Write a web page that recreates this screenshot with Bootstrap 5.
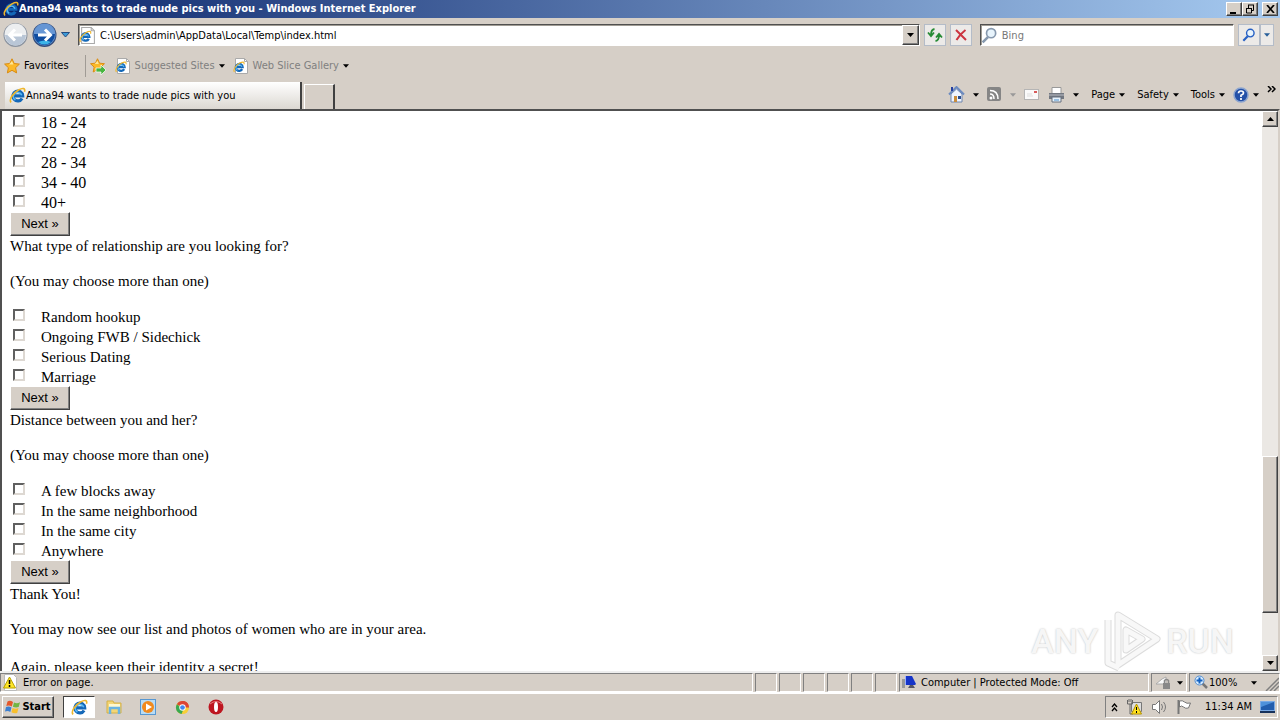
<!DOCTYPE html>
<html lang="en">
<head>
<meta charset="utf-8">
<meta name="viewport" content="width=device-width, initial-scale=1">
<title>Anna94 wants to trade nude pics with you</title>
<link href="https://cdn.jsdelivr.net/npm/bootstrap@5.3.0/dist/css/bootstrap.min.css" rel="stylesheet">
<style>
:root{--face:#d6cfc7;--dark:#808080;--ui:"DejaVu Sans Condensed","DejaVu Sans",sans-serif}
body{font:11px/16px var(--ui);color:#000;background:var(--face)}
button,input{font:inherit;color:inherit;border-radius:0}
svg{display:block;flex:none}
.plain{border:0;background:none;padding:0;white-space:nowrap}
.raised{background:var(--face);border:1px solid;border-color:#fff #404040 #404040 #fff;box-shadow:inset -1px -1px 0 var(--dark);padding:0;display:flex;align-items:center;justify-content:center}
.title-strip{height:18px;background:linear-gradient(90deg,#0a246a,#a6caf0);color:#fff;font-weight:700;padding:0 2px 0 3px}
.title-strip h1{font:inherit;margin:0}
.title-strip .raised{width:16px;height:14px}
.nav-strip{height:34px;padding:0 6px 0 3px}
.sunken{background:#fff;border:1px solid #fff;border-color:#505050 #fff #fff #505050;box-shadow:inset 1px 1px 0 #a09c94;height:22px}
.sunken input{border:0;background:none;outline:0;padding:2px 0 0;min-width:0}
.sunken input::placeholder{color:#777;opacity:1}
.find-box{width:20%}
.tool{width:22px;height:22px;padding:0;border:1px solid #b4bcc8;background:#eceae8;display:flex;align-items:center;justify-content:center}
.tool-menu{width:14px}
.fav-strip{height:28px;padding-left:4px}
.fav-strip .vr{height:22px;align-self:center}
.muted{color:#808080}
.muted .arrow{fill:#000}
.tab-strip{height:29px;padding:0 4px 0 5px}
.tab-on{width:297px;height:27px;background:linear-gradient(#fff,#dcd8d2);border:0;border-right:2px solid #404040;padding:0 0 0 4px;text-align:left}
.tab-new{width:31px;height:25px;background:none;border:1px solid #fff;border-right:2px solid #404040;border-bottom:0;margin-left:2px}
.pane{border:2px solid #505050;border-right-color:var(--face);border-bottom:0;background:#fff;min-height:0}
.doc{font:15px/20px "Liberation Serif",serif;padding:1px 8px 0}
.doc h2{font:inherit;margin:0 0 15px}
.doc p{margin:0 0 15px}
.doc .last-gap{margin-bottom:18px}
.ages{font-size:16px}
.opt{display:flex;align-items:center;height:20px;width:max-content}
.opt span{padding-top:2px}
.opt input{appearance:none;width:12px;height:12px;margin:0 16px 2px 3px;background:#fff;border:2px solid;border-color:#606060 #ddd8d2 #ddd8d2 #606060}
.next{font:13px/20px "Liberation Sans",sans-serif;width:60px;height:24px}
.bar-v{width:16px;background:#ebe8e4}
.bar-v .raised{width:16px;height:16px}
.bar-v .thumb{height:28%}
.brand-mark{right:44px;bottom:-1px;gap:4px;color:#f6f6f6;font:500 34px/62px Roboto,sans-serif;text-shadow:0 0 2px #bbb}
.status{height:23px;border-top:2px solid #eee;border-bottom:2px solid #fff}
.cell{height:19px;border:1px solid;border-color:var(--dark) #fff #fff var(--dark);margin-right:2px;display:flex;align-items:center}
.cell-s{width:22px}
.cell-zone{width:250px;padding-left:2px}
.cell-lock{width:36px}
.cell-zoom{width:91px;margin:0}
.taskbar{height:26px;padding:0 2px}
.start{width:52px;height:22px;font-weight:700;gap:1px}
.task-on{width:32px;height:22px;background:#fff;border:1px solid;border-color:#404040 #fff #fff #404040;display:flex;align-items:center;justify-content:center;padding:0;margin:0 2px 0 9px}
.launch{width:34px;display:flex;justify-content:center}
.tray{height:22px;border:1px solid;border-color:var(--dark) #fff #fff var(--dark);padding:0 1px 0 5px}
</style>
</head>
<body class="vh-100 overflow-hidden d-flex flex-column">
<svg width="0" height="0" class="position-absolute" aria-hidden="true">
<symbol id="ie" viewBox="0 0 16 16"><path d="M12.300 10.800A4.600 4.600 0 1 1 12.900 8.300H4.400" fill="none" stroke="#1468b8" stroke-width="3"/><path d="M12 7.800A4.200 4.200 0 0 0 4 8.500Q4 11 6 12.300" fill="none" stroke="#58b8f4" stroke-width="1.400"/><path d="M2 14.500C-.5 12 4 5.500 9 2.800 13 .6 15.800 1 14.500 4.500" fill="none" stroke="#eeb62c" stroke-width="1.500"/></symbol>
<symbol id="iepage" viewBox="0 0 16 16"><path d="M2.500.5h9l3 3v12h-12z" fill="#fff" stroke="#aaa"/><path d="M11.500.5v3h3" fill="none" stroke="#aaa"/><use href="#ie" x="0" y="3" width="12" height="12"/></symbol>
<symbol id="dn" viewBox="0 0 7 4"><path d="M0 0h7L3.500 4z"/></symbol>
<symbol id="star" viewBox="0 0 16 16"><path d="M8 .8l2.200 4.700 5.200.6-3.800 3.600 1 5.200L8 12.300l-4.600 2.600 1-5.200L.6 6.100l5.200-.6z" fill="#fcb928" stroke="#d98a10"/><path d="M8 3l1.400 3.400H5z" fill="#ffe796"/></symbol>
<symbol id="lens" viewBox="0 0 16 16"><path d="M6.500 9.500L1.500 14.500" stroke="currentColor" stroke-width="2.500"/><circle cx="9.500" cy="5.800" r="4.300" fill="#e8f4fc" stroke="currentColor" stroke-width="1.600"/></symbol>
</svg>

<header>
<div class="title-strip d-flex align-items-center">
<svg width="16" height="16"><use href="#ie"/></svg><h1 class="flex-grow-1 text-nowrap overflow-hidden">Anna94 wants to trade nude pics with you - Windows Internet Explorer</h1>
<button class="raised" aria-label="Minimize"><svg width="10" height="9"><path d="M1 7h6v2H1z"/></svg></button>
<button class="raised" aria-label="Restore"><svg width="10" height="10" fill="none" stroke="#000"><path d="M3 1h6M3.500 1v3M8.500 1v5.500H7M1 4.500h6M1.500 4v5h5V4"/></svg></button>
<button class="raised ms-1" aria-label="Close"><svg width="9" height="8" stroke="#000" stroke-width="1.700"><path d="M1 0l7 8M8 0L1 8"/></svg></button>
</div>
<nav class="nav-strip d-flex align-items-center" aria-label="Navigation">
<button class="plain me-1" aria-label="Back"><svg width="25" height="26" viewBox="0 0 25 26"><circle cx="12.500" cy="13" r="12" fill="#8a93a0"/><circle cx="12.500" cy="12.500" r="11" fill="#eceef0"/><path d="M2 13a10.500 10.500 0 0 0 21 0z" fill="#b9c6d6"/><path d="M19 13H7m5-5.500L6.500 13l5.500 5.500" fill="none" stroke="#fff" stroke-width="3"/></svg></button>
<button class="plain" aria-label="Forward"><svg width="25" height="26" viewBox="0 0 25 26"><circle cx="12.500" cy="13" r="12" fill="#344d7c"/><circle cx="12.500" cy="12.500" r="11" fill="#6696d4"/><path d="M2 12a10.500 11 0 0 0 21 0z" fill="#104da0"/><path d="M6 20q6.500 5 13 0-6-3-13 0" fill="#3cb4e8"/><path d="M6 13h12m-5-5.500l5.500 5.500-5.500 5.500" fill="none" stroke="#fff" stroke-width="3"/></svg></button>
<button class="plain px-1 me-1" aria-label="Recent pages"><svg width="9" height="6"><path d="M.5.5h8L4.500 5z" fill="#3a9ad8" stroke="#234b80"/></svg></button>
<div class="sunken d-flex align-items-center flex-grow-1 me-1"><svg width="17" height="17" class="me-1"><use href="#iepage"/></svg><input class="flex-grow-1" aria-label="Address" value="C:\Users\admin\AppData\Local\Temp\index.html"><button class="raised h-100 px-1" aria-label="Show addresses"><svg width="7" height="4"><use href="#dn"/></svg></button></div>
<button class="tool me-1" aria-label="Refresh"><svg width="16" height="14" viewBox="0 0 16 14" fill="none" stroke="#278b35" stroke-width="1.800"><path d="M7.500 1Q4 1.500 4 7M1 4.500L4 8l3-3.500M8.500 13q3.500-.5 3.500-6M9 9.500L12 6l3 3.500"/></svg></button>
<button class="tool me-2" aria-label="Stop"><svg width="12" height="12" stroke="#cc3540" stroke-width="2"><path d="M1 1l10 10M10.500 1Q5 5 1.500 11"/></svg></button>
<div class="sunken find-box d-flex align-items-center me-1"><svg width="17" height="17" class="me-1" color="#8799ae"><use href="#lens"/></svg><input class="flex-grow-1" aria-label="Search" placeholder="Bing"></div>
<button class="tool" aria-label="Search"><svg width="14" height="14" color="#2660c4"><use href="#lens"/></svg></button><button class="tool tool-menu" aria-label="Search options"><svg width="6" height="4" fill="#285f9a"><use href="#dn"/></svg></button>
</nav>
<nav class="fav-strip d-flex align-items-center" aria-label="Favorites">
<button class="plain d-flex align-items-center gap-1"><svg width="16" height="16"><use href="#star"/></svg>Favorites</button>
<i class="vr ms-3 me-1"></i>
<button class="plain me-2" aria-label="Add to favorites"><svg width="17" height="17"><use href="#star" width="15" height="15"/><path d="M6 10h5V7l5 5-5 5v-3H6z" fill="#49b540" stroke="#fff" stroke-width=".7"/></svg></button>
<button class="plain muted d-flex align-items-center gap-1 me-2"><svg width="16" height="16"><use href="#iepage"/></svg>Suggested Sites <svg class="arrow" width="6" height="4"><use href="#dn"/></svg></button>
<button class="plain muted d-flex align-items-center gap-1"><svg width="16" height="16"><use href="#iepage"/></svg>Web Slice Gallery <svg class="arrow" width="6" height="4"><use href="#dn"/></svg></button>
</nav>
<div class="tab-strip d-flex align-items-end">
<button class="tab-on d-flex align-items-center"><svg width="17" height="17"><use href="#ie"/></svg>Anna94 wants to trade nude pics with you</button>
<button class="tab-new" aria-label="New tab"></button>
<div class="ms-auto align-self-center d-flex align-items-center gap-2">
<button class="plain d-flex align-items-center gap-2" aria-label="Home"><svg width="17" height="17" viewBox="0 0 17 17"><path d="M3 8v8h11V8L8.500 3z" fill="#eef4ff" stroke="#6f86ad"/><path d="M1 8.500L8.500 1 16 8.500" fill="none" stroke="#6c8bc0" stroke-width="2"/><path d="M3 1h2v4H3z" fill="#263fa0"/><path d="M6 10h3v6H6z" fill="#c98d3d"/><path d="M10 10h3v3h-3z" fill="#284c8c"/></svg><svg width="6" height="4"><use href="#dn"/></svg></button>
<button class="plain d-flex align-items-center gap-2" aria-label="Feeds"><svg width="15" height="15"><rect width="14" height="14" rx="2" fill="#858585"/><circle cx="4" cy="11" r="1.500" fill="#fff"/><path d="M3 7q4 0 4 5M3 3.500q8 0 8 8.500" fill="none" stroke="#fff" stroke-width="1.500"/></svg><svg width="6" height="4" fill="#999"><use href="#dn"/></svg></button>
<button class="plain" aria-label="Read mail"><svg width="16" height="12"><rect x=".5" y=".5" width="14" height="10" fill="#fafafa" stroke="#b5b5b5"/><path d="M10 2h3v2h-3z" fill="#d85b5b"/><path d="M3 5h5M3 7h6" stroke="#ddd"/></svg></button>
<button class="plain d-flex align-items-center gap-2" aria-label="Print"><svg width="17" height="16"><path d="M4 .5h9v7H4z" fill="#fff" stroke="#999"/><path d="M1 6h15v6H1z" fill="#727780"/><path d="M1 8h15" stroke="#b9bdc4"/><path d="M4 10h9v5H4z" fill="#e8f2fb" stroke="#66717e"/><path d="M6 13h5" stroke="#4b8fc9"/></svg><svg width="6" height="4"><use href="#dn"/></svg></button>
<button class="plain d-flex align-items-center gap-1 ms-1">Page<svg width="6" height="4"><use href="#dn"/></svg></button>
<button class="plain d-flex align-items-center gap-1 ms-1">Safety<svg width="6" height="4"><use href="#dn"/></svg></button>
<button class="plain d-flex align-items-center gap-1 ms-1">Tools<svg width="6" height="4"><use href="#dn"/></svg></button>
<button class="plain d-flex align-items-center gap-1" aria-label="Help"><svg width="16" height="16"><circle cx="8" cy="8" r="7" fill="#2451a8" stroke="#8ca5cf" stroke-width="1.500"/><path d="M5.500 6.200Q5.600 4 8 4t2.500 2Q10.500 7.500 8 8.300V10M8 11v2" fill="none" stroke="#fff" stroke-width="1.700"/></svg><svg width="6" height="4"><use href="#dn"/></svg></button>
<button class="plain align-self-start" aria-label="More commands"><svg width="9" height="7" fill="none" stroke="#000" stroke-width="1.500"><path d="M1 0l3 3-3 3M5 0l3 3-3 3"/></svg></button>
</div>
</div>
</header>

<div class="pane d-flex flex-grow-1 position-relative">
<main class="doc flex-grow-1 overflow-hidden">
<form>
<div class="ages">
<label class="opt"><input type="checkbox"><span>18 - 24</span></label>
<label class="opt"><input type="checkbox"><span>22 - 28</span></label>
<label class="opt"><input type="checkbox"><span>28 - 34</span></label>
<label class="opt"><input type="checkbox"><span>34 - 40</span></label>
<label class="opt"><input type="checkbox"><span>40+</span></label>
</div>
<button type="button" class="next raised">Next »</button>
<h2>What type of relationship are you looking for?</h2>
<p>(You may choose more than one)</p>
<label class="opt"><input type="checkbox"><span>Random hookup</span></label>
<label class="opt"><input type="checkbox"><span>Ongoing FWB / Sidechick</span></label>
<label class="opt"><input type="checkbox"><span>Serious Dating</span></label>
<label class="opt"><input type="checkbox"><span>Marriage</span></label>
<button type="button" class="next raised">Next »</button>
<h2>Distance between you and her?</h2>
<p>(You may choose more than one)</p>
<label class="opt"><input type="checkbox"><span>A few blocks away</span></label>
<label class="opt"><input type="checkbox"><span>In the same neighborhood</span></label>
<label class="opt"><input type="checkbox"><span>In the same city</span></label>
<label class="opt"><input type="checkbox"><span>Anywhere</span></label>
<button type="button" class="next raised">Next »</button>
<h2>Thank You!</h2>
<p class="last-gap">You may now see our list and photos of women who are in your area.</p>
<p>Again, please keep their identity a secret!</p>
</form>
</main>
<div class="bar-v d-flex flex-column">
<button class="raised" aria-label="Scroll up"><svg width="7" height="4"><path d="M0 4h7L3.500 0z"/></svg></button>
<div style="flex:329"></div><div class="raised thumb"></div><div style="flex:42"></div>
<button class="raised" aria-label="Scroll down"><svg width="7" height="4"><use href="#dn"/></svg></button>
</div>
<div class="brand-mark position-absolute d-flex align-items-center pe-none"><span>ANY</span><svg width="60" height="62" viewBox="0 0 60 62" fill="none" stroke-linejoin="round"><g stroke="#dcdcdc" stroke-width="7"><path d="M16 5l39 24-39 26z"/><path d="M6 10v43l11 5M24 20v20l16-11z"/></g><g stroke="#f8f8f8" stroke-width="5"><path d="M16 5l39 24-39 26z"/><path d="M6 10v43l11 5M24 20v20l16-11z"/></g></svg><span>RUN</span></div>
</div>

<footer>
<div class="status d-flex">
<div class="cell flex-grow-1"><svg width="18" height="17"><path d="M3.500.5h9l3 3v13h-12z" fill="#fff" stroke="#bbb"/><path d="M8.500 3l6 11h-12z" fill="#ffe628" stroke="#b8a000"/><path d="M8.500 6v4M8.500 11v2" stroke="#000" stroke-width="1.500"/></svg><span class="ps-1">Error on page.</span></div>
<div class="cell cell-s"></div><div class="cell cell-s"></div><div class="cell cell-s"></div><div class="cell cell-s"></div><div class="cell cell-s"></div><div class="cell cell-s"></div>
<div class="cell cell-zone"><svg width="15" height="15" class="me-1"><path d="M0 4h3v9H0z" fill="#999"/><path d="M3 1h7l4 8-1 1H3z" fill="#1634c8"/><path d="M3.500 1v9" stroke="#9ab0ff"/><path d="M8 10h3l2 3H6z" fill="#556"/></svg>Computer | Protected Mode: Off</div>
<div class="cell cell-lock justify-content-around"><svg width="16" height="15"><path d="M1 9l6-5 4-2v7z" fill="#fafafa" stroke="#aaa"/><path d="M8 8h7v6H8z" fill="#888"/><path d="M9.500 8V5.500q2-2 4 0V8" fill="none" stroke="#888" stroke-width="1.500"/></svg><svg width="6" height="4"><use href="#dn"/></svg></div>
<div class="cell cell-zoom"><svg width="15" height="15" class="ms-1"><path d="M8 8l5 5" stroke="#777" stroke-width="2.500"/><circle cx="5.500" cy="5.500" r="4.500" fill="#d7ecff" stroke="#548ed0"/><path d="M2.500 5.500h6M5.500 2.500v6" stroke="#1260c0" stroke-width="2"/></svg><span class="flex-grow-1">100%</span><svg width="6" height="4" class="me-2"><use href="#dn"/></svg><svg width="14" height="14" class="align-self-end" stroke="#808080" stroke-width="1.500"><path d="M1 14L14 1M5 14l9-9M9 14l5-5"/></svg></div>
</div>
<div class="taskbar d-flex align-items-center">
<button class="raised start"><svg width="16" height="16" viewBox="0 0 16 16"><path d="M2.500 2.500Q5 1 8 3L6.800 7.500Q4 6 1.300 7z" fill="#e4572a"/><path d="M9 3.500q3 1.500 6-.2L13.700 8Q11 9 7.900 7.800z" fill="#71b542"/><path d="M1 8q3-1 5.500.5L5.300 13Q3 11.500 0 12.500z" fill="#3b7fd0"/><path d="M7.600 9q3 1.500 5.900.1L12.200 14q-3 1-5.800-.7z" fill="#f8bf2c"/></svg>Start</button>
<button class="task-on" aria-label="Internet Explorer"><svg width="17" height="17"><use href="#ie"/></svg></button>
<button class="plain launch" aria-label="Explorer"><svg width="17" height="16"><path d="M1 2h6l1 2h7v10H1z" fill="#f4d675" stroke="#d3b048"/><path d="M3 5h11v3H3z" fill="#fff8cf"/><path d="M4 15V9h9v6" fill="none" stroke="#69b3e2" stroke-width="2.500"/></svg></button>
<button class="plain launch" aria-label="Media Player"><svg width="16" height="16"><rect x=".5" y=".5" width="15" height="15" fill="#b8dcf5" stroke="#5797d1"/><circle cx="8" cy="8" r="6" fill="#f18a1e"/><path d="M6 4.500v7L12 8z" fill="#fff"/></svg></button>
<button class="plain launch" aria-label="Chrome"><svg width="15" height="15" viewBox="0 0 16 16"><circle cx="8" cy="8" r="7" fill="#f7cf38"/><path d="M8 8H15A7 7 0 0 0 2 4.500z" fill="#dc4535"/><path d="M2 4.500A7 7 0 0 0 7 15l2-5z" fill="#38a852"/><path d="M8 1a7 7 0 0 1 6.200 4H8z" fill="#dc4535"/><circle cx="8" cy="8" r="3.400" fill="#fff"/><circle cx="8" cy="8" r="2.500" fill="#4387ee"/></svg></button>
<button class="plain launch" aria-label="Opera"><svg width="16" height="16"><circle cx="8" cy="8" r="7.500" fill="#bd1620"/><path d="M2 5q6-5 12 0" stroke="#e8787c" fill="none"/><ellipse cx="8" cy="8" rx="2" ry="5" fill="#fff"/></svg></button>
<div class="tray ms-auto d-flex align-items-center gap-2">
<button class="plain" aria-label="Show hidden icons"><svg width="7" height="9" fill="none" stroke="#000" stroke-width="1.300"><path d="M1 4l2.500-3L6 4M1 8l2.500-3L6 8"/></svg></button>
<svg width="17" height="16"><path d="M5.500 3.500h10v9h-10z" fill="#ddd" stroke="#777"/><path d="M1.500 1v4h5V1M3 0v3M5 0v3M4 5v10h3" fill="none" stroke="#666"/><path d="M10.500 5l5 10h-10z" fill="#ffe01e" stroke="#b59400"/><path d="M10.500 8v3M10.500 12v2" stroke="#000"/></svg>
<svg width="17" height="16" fill="none" stroke="#777"><path d="M1.500 5.500h3l4-4v13l-4-4h-3z" fill="#fff"/><path d="M10.500 5q2 3 0 6M12.500 3q4 5 0 10"/></svg>
<svg width="17" height="16"><path d="M2.500 1v14" stroke="#777" stroke-width="2"/><path d="M3.500 2q3-1 5 1t6 1l-2 5q-3 1-5-1t-4 0z" fill="#fff" stroke="#777"/></svg>
<time class="ms-1">11:34 AM</time>
<svg width="16" height="14"><path d="M.5 1.500h14v9H.5z" fill="#225dad" stroke="#79a9e4"/><path d="M1 2h13L1 7z" fill="#4e91da"/><path d="M0 12h15" stroke="#16315b" stroke-width="2"/></svg>
</div>
</div>
</footer>
<script src="https://cdn.jsdelivr.net/npm/bootstrap@5.3.0/dist/js/bootstrap.bundle.min.js"></script>
</body>
</html>
